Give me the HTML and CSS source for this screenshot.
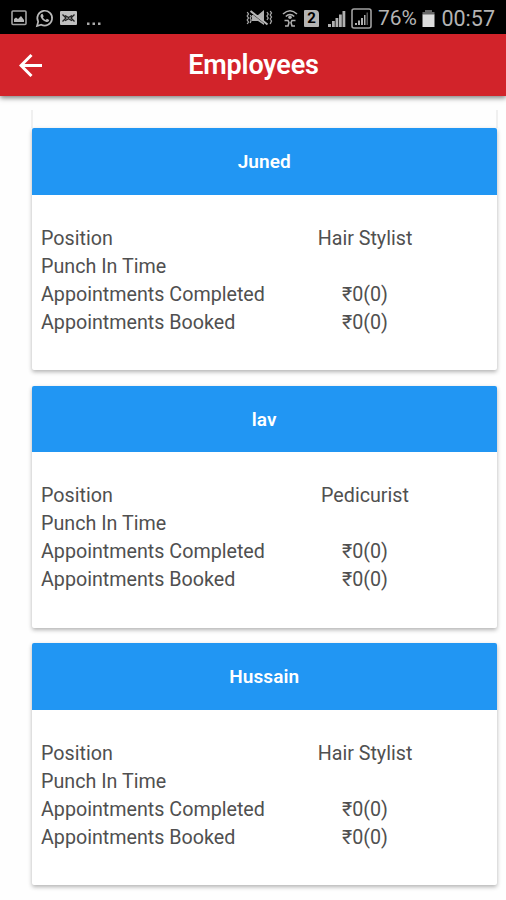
FILE: index.html
```html
<!DOCTYPE html>
<html lang="en">
<head>
  <meta charset="UTF-8" />
  <meta name="viewport" content="width=device-width, initial-scale=1.0"/>
  <title>Employees</title>
  <link rel="stylesheet" href="styles.css">
</head>
<body>

  <div class="status-bar">
    <div class="notifications">
      <svg width="16" height="16" viewBox="0 0 16 16">
        <rect x="1" y="1" width="14" height="13.5" rx="1" fill="none" stroke="#a2a2a2" stroke-width="1.6"/>
        <path d="M3 12V9l2-1.500 2 1.500 3-3 3 4v2z" fill="#b8b8b8"/>
      </svg>
      <svg class="whatsapp" width="19" height="19" viewBox="0 0 19 19">
        <path d="M2 17l1.200-4.300A7.400 7.400 0 1 1 6.200 15.700z" fill="none" stroke="#b8b8b8" stroke-width="1.700"/>
        <path d="M6.200 5.200l1.300-.5 1.200 2.500-.8 1.100c.7 1.400 1.500 2.100 2.900 2.700l1.100-1.200 2.300 1.200c-.2 1.600-1.300 2.200-2.700 1.900-3.300-.7-6-3.700-6-6.100z" fill="#b8b8b8"/>
      </svg>
      <svg class="mail" width="17" height="14" viewBox="0 0 17 14">
        <rect width="17" height="14" rx="1" fill="#c0c0c0"/>
        <path d="M2.500 3.500L6 7l-3.500 3.500M14.500 3.500L11 7l3.500 3.500M5 4.500l3.500 2 3.500-2M5 9.800l3.500-2 3.500 2" fill="none" stroke="#222" stroke-width="1.300"/>
      </svg>
      <svg class="more" width="16" height="4" viewBox="0 0 16 4">
        <path d="M1 .5h2.500v2.500H1zM6.500 .5H9v2.500H6.500zM12 .5h2.500v2.500H12z" fill="#aaa"/>
      </svg>
    </div>

    <div class="system">
      <svg width="27" height="18" viewBox="0 0 27 18">
        <path d="M6 6h6l6-5v15l-6-4H6z" fill="#b0b0b0"/>
        <path d="M5 3.500l17 13" stroke="#000" stroke-width="1.200"/>
        <path d="M4.500 2l17 13.500" stroke="#b8b8b8" stroke-width="2"/>
        <path d="M1.200 3l1.300 2-1.300 2 1.300 2-1.300 2 1.300 2-1.300 2M4.200 6l1 1.500-1 1.500 1 2-1 3M21 3l1.200 2-1.200 2 1.200 2-1.200 2M24.200 2l1.300 2-1.300 2 1.300 2-1.300 2 1.300 2-1.300 3" fill="none" stroke="#a5a5a5" stroke-width="1.300"/>
      </svg>
      <svg class="wifi" width="16" height="18" viewBox="0 0 16 18">
        <path d="M1 5Q8-1.500 15 5M3.800 7.500Q8 3.500 12.200 7.500" fill="none" stroke="#b0b0b0" stroke-width="1.600"/>
        <circle cx="8" cy="8.300" r="1.800" fill="#b0b0b0"/>
        <path d="M2.500 11.500H6l1 2-1 3.500H3M13.500 11.500H10l-1 2 1 3.500h3" fill="none" stroke="#b0b0b0" stroke-width="1.600"/>
      </svg>
      <div class="sim">2</div>
      <svg class="signal" width="18" height="17" viewBox="0 0 18 17">
        <path d="M0 14h3v3H0zM4 11h2.800v6H4zM7.500 8h2.800v9H7.500zM11 4.500h2.800V17H11zM14.500 1h2.800v16h-2.800z" fill="#b0b0b0"/>
      </svg>
      <svg class="signal-box" width="21" height="21" viewBox="0 0 21 21">
        <rect x="1" y="1" width="19" height="19" rx="2" fill="none" stroke="#a0a0a0" stroke-width="1.600"/>
        <path d="M4 15h2v2H4zM7 12.500h2V17H7zM10 10h2v7h-2zM13 7h1.500v10H13z" fill="#b0b0b0"/>
        <path d="M15.500 4.500H17V17h-1.500z" fill="#555"/>
      </svg>
      <span class="percent">76%</span>
      <svg class="battery" width="13" height="17" viewBox="0 0 13 17">
        <path d="M3 0h7v2h2.500v3H.5V2H3z" fill="#666"/>
        <path d="M.5 4.500h12V17H.5z" fill="#ddd"/>
      </svg>
      <span class="clock">00:57</span>
    </div>
  </div>

  <header class="app-bar">
    <svg class="back" width="24" height="24" viewBox="0 0 24 24">
      <path d="M23 12.500H2M12.500 2L2 12.500l10.500 10.500" fill="none" stroke="#fff" stroke-width="3"/>
    </svg>
    <h1>Employees</h1>
  </header>

  <main class="list">
    <div class="list-edge"></div>

    <section class="card">
      <h2>Juned</h2>
      <dl>
        <dt>Position</dt><dd>Hair Stylist</dd>
        <dt>Punch In Time</dt><dd></dd>
        <dt>Appointments Completed</dt><dd>₹0(0)</dd>
        <dt>Appointments Booked</dt><dd>₹0(0)</dd>
      </dl>
    </section>

    <section class="card">
      <h2>lav</h2>
      <dl>
        <dt>Position</dt><dd>Pedicurist</dd>
        <dt>Punch In Time</dt><dd></dd>
        <dt>Appointments Completed</dt><dd>₹0(0)</dd>
        <dt>Appointments Booked</dt><dd>₹0(0)</dd>
      </dl>
    </section>

    <section class="card">
      <h2>Hussain</h2>
      <dl>
        <dt>Position</dt><dd>Hair Stylist</dd>
        <dt>Punch In Time</dt><dd></dd>
        <dt>Appointments Completed</dt><dd>₹0(0)</dd>
        <dt>Appointments Booked</dt><dd>₹0(0)</dd>
      </dl>
    </section>
  </main>

</body>
</html>
```
FILE: styles.css
```css
* {
  box-sizing: border-box;
}

body {
  font-family: Roboto, "Liberation Sans", sans-serif;
  background: #fefefe;
  margin: 0;
  height: 900px;
  overflow: hidden;
}

h1, h2, dl, dd {
  margin: 0;
}

svg {
  display: block;
  flex: none;
}

.status-bar {
  display: flex;
  justify-content: space-between;
  height: 34px;
  padding: 2px 11px 0 11px;
  background: #000;
  color: #b4b4b4;
}

.notifications, .system {
  display: flex;
  align-items: center;
}

.whatsapp {
  margin-left: 8px;
}

.mail {
  margin-left: 6px;
}

.more {
  margin: 12px 0 0 9px;
}

.wifi {
  margin-left: 9px;
}

.sim {
  width: 15px;
  height: 17px;
  margin-left: 6px;
  border-radius: 1px 4px 1px 1px;
  background: #b4b4b4;
  color: #000;
  font-size: 15px;
  font-weight: 700;
  line-height: 17px;
  text-align: center;
}

.signal {
  margin-left: 9px;
}

.signal-box {
  margin-left: 5px;
}

.percent {
  margin-left: 6px;
  font-size: 21px;
}

.battery {
  margin-left: 5px;
}

.clock {
  margin-left: 6.5px;
  font-size: 21.5px;
}

.app-bar {
  position: relative;
  display: grid;
  grid-template-columns: 24px 1fr 24px;
  align-items: center;
  height: 62px;
  padding: 0 18px 0 19px;
  background: #d2232a;
  color: #fff;
  box-shadow: 0 2px 5px rgba(0, 0, 0, 0.5);
}

.app-bar h1 {
  font-size: 27px;
  font-weight: 600;
  letter-spacing: -0.2px;
  line-height: 61px;
  text-align: center;
}

.list {
  height: 790px;
  margin-top: 14px;
  padding: 0 9.5px 0 32px;
  overflow: hidden;
}

.list-edge {
  height: 18px;
  border: solid #f0f0f0;
  border-width: 0 2px;
  margin: 0 -1px;
}

.card {
  height: 242px;
  margin-bottom: 15.5px;
  border-radius: 2px;
  background: #fff;
  box-shadow: 0 2px 4px rgba(0, 0, 0, 0.3);
  overflow: hidden;
}

.card h2 {
  height: 66.5px;
  background: #2196f3;
  color: #fff;
  font-size: 19px;
  font-weight: 600;
  letter-spacing: 0.1px;
  line-height: 67px;
  text-align: center;
}

.card dl {
  display: grid;
  grid-template-columns: 224px 200px;
  grid-auto-rows: 28.1px;
  padding: 30px 9px;
  color: #505050;
  font-size: 19.7px;
  line-height: 28px;
  white-space: nowrap;
}

.card dd {
  text-align: center;
}
```
